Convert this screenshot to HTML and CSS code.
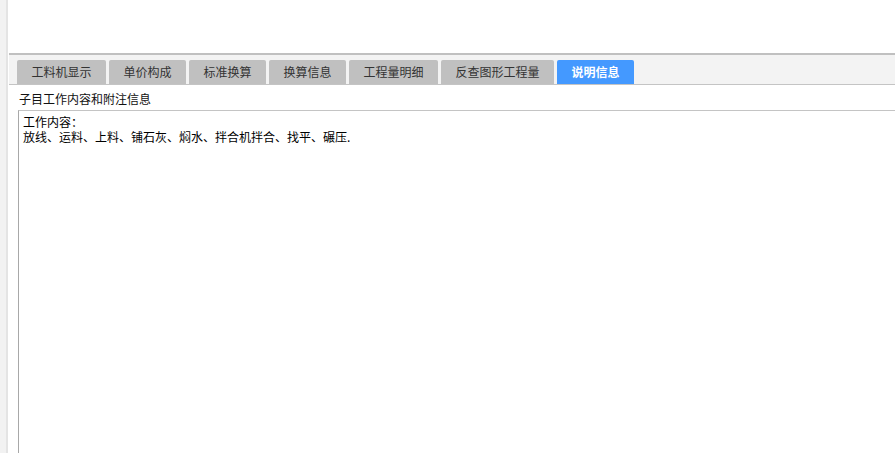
FILE: index.html
```html
<!DOCTYPE html>
<html lang="zh-CN">
<head>
    <meta charset="UTF-8">
    <meta name="viewport" content="width=device-width, initial-scale=1.0">
    <title>说明信息</title>
    <link rel="stylesheet" href="styles.css">
</head>
<body>
    <div class="side-strip"></div>

    <div class="main">
        <div class="top-space"></div>

        <div class="tab-bar">
            <div class="tab">工料机显示</div>
            <div class="tab">单价构成</div>
            <div class="tab">标准换算</div>
            <div class="tab">换算信息</div>
            <div class="tab">工程量明细</div>
            <div class="tab">反查图形工程量</div>
            <div class="tab active">说明信息</div>
        </div>

        <div class="panel">
            <div class="panel-title">子目工作内容和附注信息</div>
            <div class="note-box">
                <p>工作内容：</p>
                <p>放线、运料、上料、铺石灰、焖水、拌合机拌合、找平、碾压.</p>
            </div>
        </div>
    </div>
</body>
</html>
```

FILE: styles.css
```css
html, body {
    height: 100%;
}
body {
    margin: 0;
    display: flex;
    overflow: hidden;
    background: #fff;
    font-family: "Noto Sans CJK SC", "Noto Sans", sans-serif;
    font-size: 12px;
    color: #222;
}
.side-strip {
    width: 6px;
    flex-shrink: 0;
    background: #f2f2f2;
    border-right: 2px solid #e4e4e4;
}
.main {
    flex: 1;
    display: flex;
    flex-direction: column;
    padding-left: 1px;
}
.top-space {
    height: 53px;
    flex-shrink: 0;
}
.tab-bar {
    display: flex;
    align-items: flex-end;
    gap: 3px;
    height: 32px;
    box-sizing: border-box;
    padding-left: 8px;
    background: #f3f3f3;
    border-top: 2px solid #c0c0c0;
    border-bottom: 1px solid #c4c4c4;
    flex-shrink: 0;
}
.tab {
    height: 24px;
    line-height: 24px;
    padding: 0 14.5px;
    background: #c0c0c0;
    color: #333;
    border-radius: 2px 2px 0 0;
    white-space: nowrap;
}
.tab.active {
    background: #4499ff;
    color: #fff;
    font-weight: bold;
}
.panel {
    flex: 1;
    display: flex;
    flex-direction: column;
    padding-left: 9px;
}
.panel-title {
    height: 25px;
    box-sizing: border-box;
    padding: 6px 0 0 1px;
    line-height: 16px;
    color: #111;
}
.note-box {
    flex: 1;
    margin-bottom: -4px;
    padding: 3px 4px;
    border: 1px solid #a8a8a8;
    border-top-color: #c4c4c4;
    border-right: none;
    color: #000;
}
.note-box p {
    margin: 0;
    line-height: 15px;
}
```
